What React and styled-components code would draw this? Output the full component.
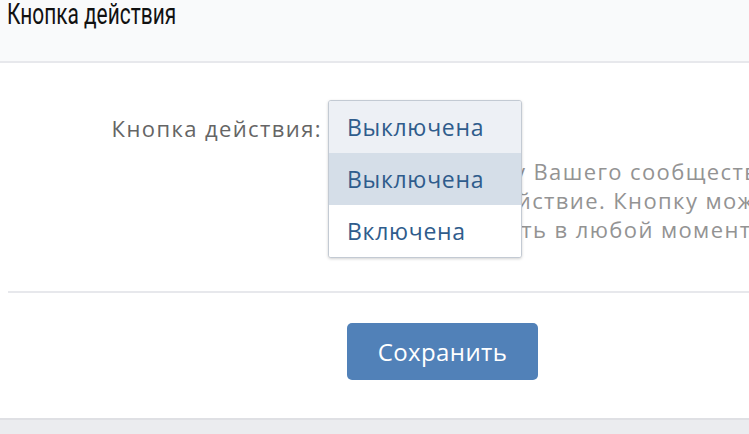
import styled, { createGlobalStyle } from 'styled-components'

const GlobalStyle = createGlobalStyle`
    html, body {
        margin: 0;
        padding: 0;
        background: #ffffff;
    }
    body {
        font-family: "Open Sans", Inter, "Liberation Sans", sans-serif;
        -webkit-font-smoothing: antialiased;
    }
`

const options = ['Выключена', 'Включена'];

export default function App() {
    return (
        <Page>
            <GlobalStyle />
            <Header>
                <Title>Кнопка действия</Title>
            </Header>
            <Content>
                <FormRow>
                    <Label>Кнопка действия:</Label>
                    <Field>
                        <SelectBox>
                            <Dropdown>
                                <Option $current>Выключена</Option>
                                {options.map((option, i) => (
                                    <Option key={option} $hover={i === 0}>{option}</Option>
                                ))}
                            </Dropdown>
                        </SelectBox>
                        <Description>
                            <Line>Кнопка будет у Вашего сообщества</Line>
                            <Line>и добавить действие. Кнопку можно</Line>
                            <Line>легко отключать в любой момент.</Line>
                        </Description>
                    </Field>
                </FormRow>
                <Divider />
                <FormRow>
                    <span />
                    <div>
                        <SaveButton>Сохранить</SaveButton>
                    </div>
                </FormRow>
            </Content>
            <Footer />
        </Page>
    )
}

const Page = styled.div`
    display: flex;
    flex-direction: column;
    width: 749px;
    height: 434px;
    overflow: hidden;
`

const Header = styled.header`
    height: 61px;
    flex-shrink: 0;
    background: #f9fafb;
    border-bottom: 2px solid #e7e8ec;
    padding-left: 7px;
`

const Title = styled.h1`
    margin: 0;
    font-family: Roboto, "Liberation Sans", sans-serif;
    font-weight: 400;
    font-size: 29px;
    line-height: 28px;
    color: #111111;
    transform: scaleX(0.72);
    transform-origin: left center;
    white-space: nowrap;
`

const Content = styled.main`
    flex: 1;
    display: flex;
    flex-direction: column;
    padding-top: 37px;
`

const FormRow = styled.div`
    display: grid;
    grid-template-columns: 322px 1fr;
    column-gap: 25px;
`

const Label = styled.label`
    text-align: right;
    font-size: 22px;
    line-height: 56px;
    letter-spacing: 1.4px;
    color: #656565;
    white-space: nowrap;
`

const Field = styled.div`
    display: flex;
    flex-direction: column;
    min-width: 0;
`

const SelectBox = styled.div`
    position: relative;
    height: 57px;
`

const Dropdown = styled.ul`
    position: absolute;
    top: 0;
    left: -19px;
    width: 192px;
    margin: 0;
    padding: 0;
    list-style: none;
    background: #ffffff;
    border: 1px solid #c3cad3;
    border-radius: 3px;
    box-shadow: 0 1px 3px rgba(0, 0, 0, 0.18);
    overflow: hidden;
    z-index: 2;
`

const Option = styled.li`
    height: 52px;
    display: flex;
    align-items: center;
    padding-left: 18px;
    font-size: 23px;
    letter-spacing: 0.7px;
    color: #2f5c8c;
    background: ${p => p.$current ? '#edf0f5' : p.$hover ? '#d5dee8' : '#ffffff'};
`

const Description = styled.div`
    display: flex;
    flex-direction: column;
    font-size: 22px;
    line-height: 29px;
    letter-spacing: 1.4px;
    color: #939393;
    white-space: nowrap;
`

const Line = styled.span`
    display: block;
`

const Divider = styled.hr`
    margin: 47px 0 0 8px;
    border: none;
    border-top: 2px solid #e7e8ec;
    height: 0;
    margin-bottom: 30px;
`

const SaveButton = styled.button`
    appearance: none;
    width: 191px;
    height: 57px;
    border: none;
    border-radius: 5px;
    background: #5181b8;
    color: #ffffff;
    font-family: inherit;
    font-size: 24px;
    letter-spacing: 0.4px;
    cursor: pointer;
`

const Footer = styled.footer`
    height: 14px;
    flex-shrink: 0;
    margin-top: auto;
    background: #ebecef;
    border-top: 2px solid #dfe0e4;
`
